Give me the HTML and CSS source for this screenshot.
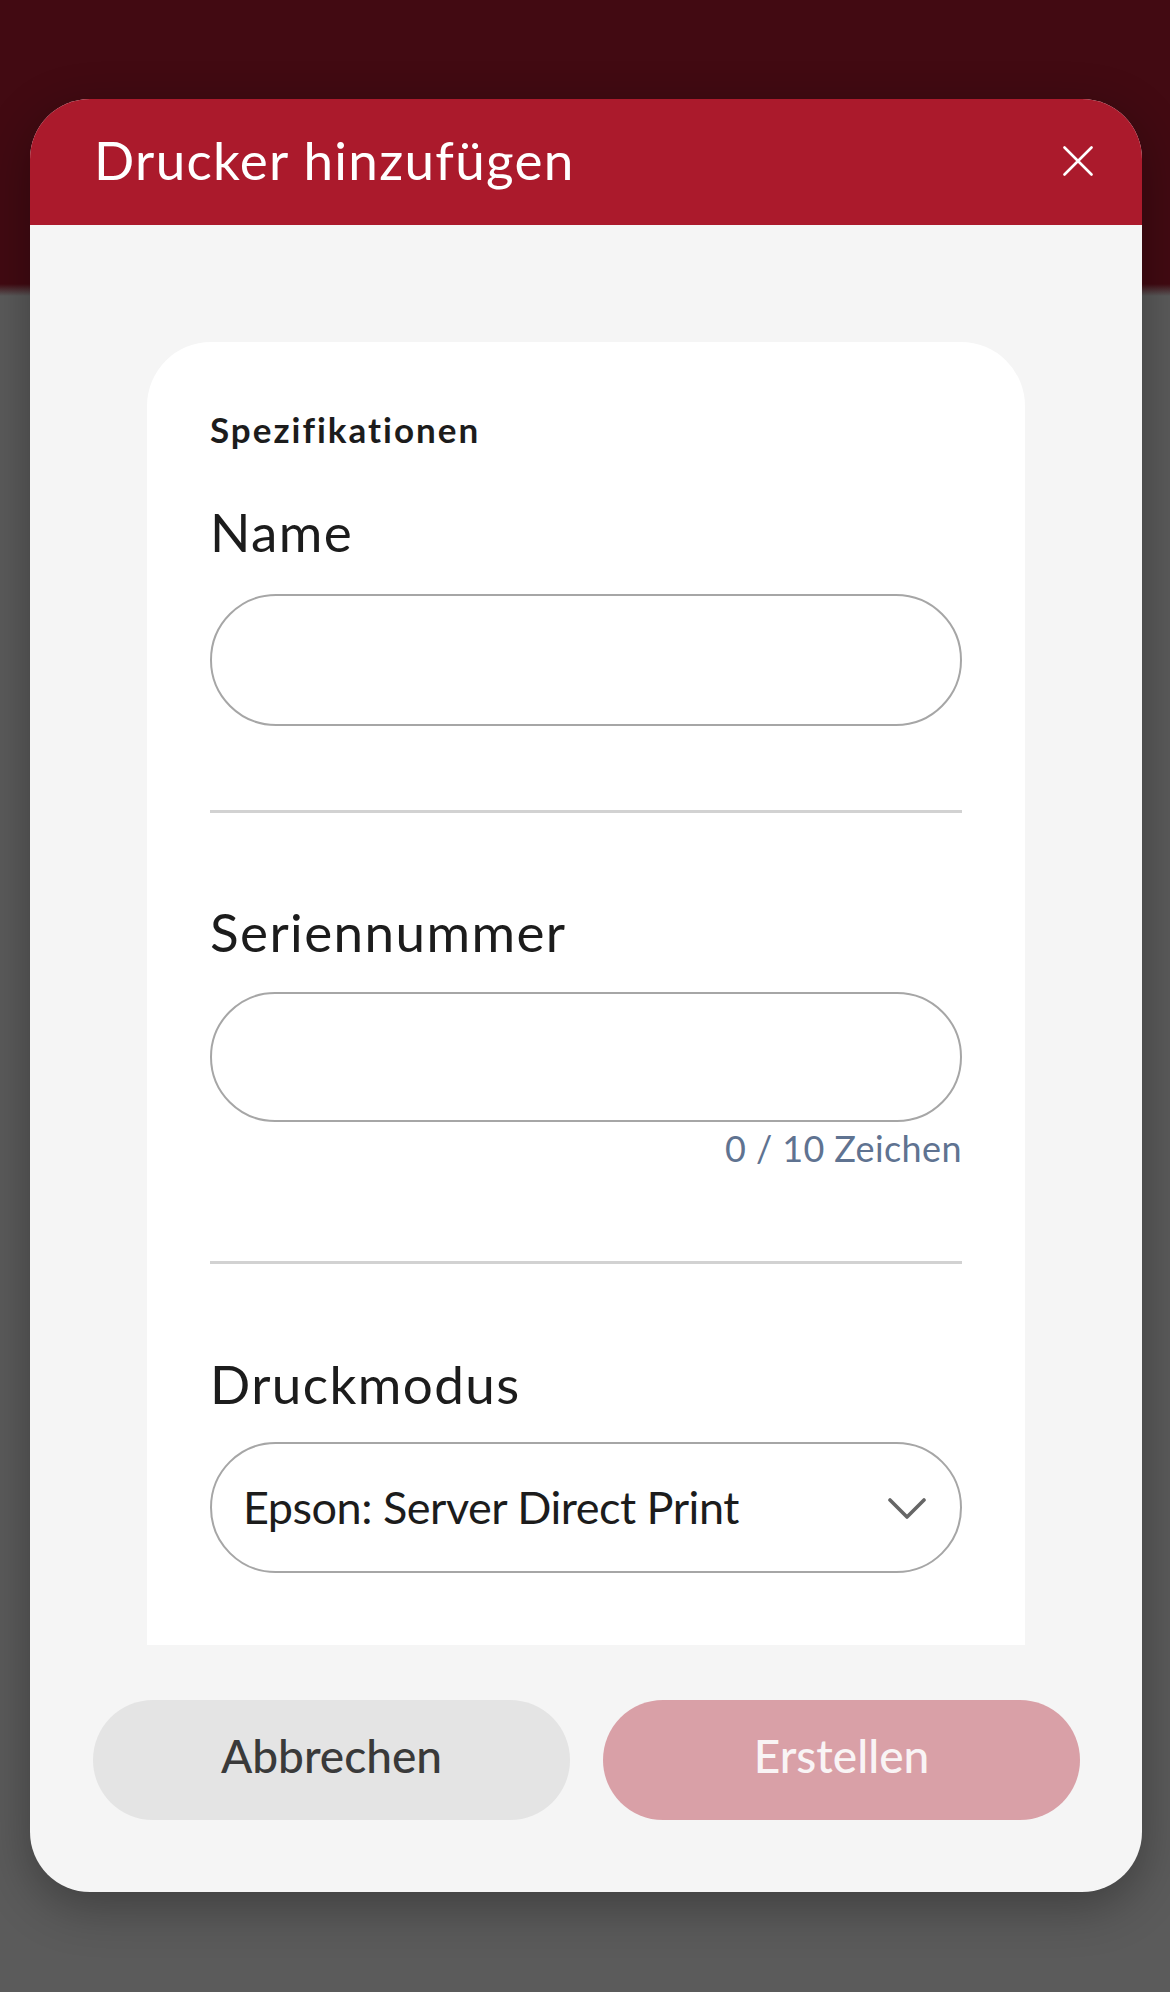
FILE: index.html
```html
<!DOCTYPE html>
<html lang="de">
<head>
<meta charset="utf-8">
<title>Drucker hinzufügen</title>
<link rel="stylesheet" href="styles.css">
</head>
<body>
<div class="backdrop">
  <div class="dialog">
    <div class="dialog-header">
      <h1 class="dialog-title">Drucker hinzufügen</h1>
      <button class="close-btn" aria-label="Schließen">
        <svg width="30" height="30" viewBox="0 0 30 30"><path d="M1.5 1.5 L28.5 28.5 M28.5 1.5 L1.5 28.5" stroke="#fff" stroke-width="2.6" stroke-linecap="round" fill="none"/></svg>
      </button>
    </div>
    <div class="dialog-body">
      <div class="card">
        <div class="section-title">Spezifikationen</div>
        <label class="field-label label-name">Name</label>
        <div class="input input-name"></div>
        <div class="divider divider-1"></div>
        <label class="field-label label-serial">Seriennummer</label>
        <div class="input input-serial"></div>
        <div class="counter">0 / 10 Zeichen</div>
        <div class="divider divider-2"></div>
        <label class="field-label label-mode">Druckmodus</label>
        <div class="select">
          <span class="select-value">Epson: Server Direct Print</span>
          <svg class="chevron" width="38" height="22" viewBox="0 0 38 22"><path d="M2 2 L19 19 L36 2" stroke="#666" stroke-width="3.6" stroke-linecap="round" stroke-linejoin="round" fill="none"/></svg>
        </div>
      </div>
    </div>
    <div class="dialog-actions">
      <button class="btn btn-cancel">Abbrechen</button>
      <button class="btn btn-create">Erstellen</button>
    </div>
  </div>
</div>
</body>
</html>
```
FILE: styles.css
```css
* { box-sizing: border-box; }
html, body {
  margin: 0;
  padding: 0;
}
body {
  width: 1170px;
  height: 1992px;
  overflow: hidden;
  font-family: "Lato", "Noto Sans", sans-serif;
  font-variant-ligatures: none;
  background: #5b5b5b;
}
.backdrop {
  height: 1992px;
  padding-top: 99px;
  background: linear-gradient(to bottom, #420a12 0, #420a12 284px, #5b5b5b 296px, #5b5b5b 100%);
}
.dialog {
  margin-left: 30px;
  width: 1112px;
  height: 1793px;
  border-radius: 60px;
  overflow: hidden;
  background: #f5f5f5;
  box-shadow: 0 14px 50px rgba(0, 0, 0, 0.32);
  display: flex;
  flex-direction: column;
}
.dialog-header {
  height: 126px;
  flex: none;
  background: #ab1a2c;
  display: flex;
  align-items: center;
  justify-content: space-between;
  padding: 0 49px 5px 64px;
}
.dialog-title {
  margin: 0;
  font-weight: 400;
  font-size: 53px;
  line-height: 1;
  letter-spacing: 1.3px;
  color: #ffffff;
}
.close-btn {
  border: 0;
  background: none;
  padding: 0;
  width: 30px;
  height: 30px;
  margin-top: 2px;
  display: block;
}
.close-btn svg { display: block; }
.dialog-body {
  padding: 117px 117px 0;
  flex: none;
}
.card {
  background: #ffffff;
  border-radius: 64px 64px 0 0;
  padding: 70px 63px 72px;
  display: flex;
  flex-direction: column;
}
.section-title {
  font-weight: 700;
  font-size: 35px;
  line-height: 1;
  letter-spacing: 2px;
  color: #1c1c1c;
  height: 35px;
}
.field-label {
  display: block;
  font-size: 53px;
  line-height: 1;
  letter-spacing: 1.4px;
  height: 53px;
  color: #1c1c1c;
}
.label-name { margin-top: 58px; }
.label-serial { margin-top: 92px; }
.label-mode { margin-top: 93px; }
.input {
  border: 2px solid #a6a6a6;
  border-radius: 70px;
  background: #fff;
}
.input-name { margin-top: 36px; height: 132px; }
.input-serial { margin-top: 34px; height: 130px; }
.counter {
  margin-top: 8px;
  text-align: right;
  font-size: 36px;
  line-height: 1;
  letter-spacing: 0.4px;
  color: #5f7391;
}
.divider {
  height: 3px;
  background: #d2d2d2;
}
.divider-1 { margin-top: 84px; }
.divider-2 { margin-top: 95px; }
.select {
  margin-top: 32px;
  height: 131px;
  border: 2px solid #a6a6a6;
  border-radius: 70px;
  display: flex;
  align-items: center;
  justify-content: space-between;
  padding: 0 34px 0 31px;
}
.select-value {
  font-size: 45px;
  line-height: 1;
  letter-spacing: -0.5px;
  color: #1c1c1c;
}
.chevron { display: block; margin-top: 2px; }
.dialog-actions {
  margin-top: 55px;
  padding: 0 62px 0 63px;
  display: flex;
  gap: 33px;
}
.btn {
  flex: 1;
  height: 120px;
  border: 0;
  border-radius: 60px;
  font-family: "Lato", "Noto Sans", sans-serif;
  font-size: 46px;
  font-weight: 500;
  line-height: 1;
  padding: 0 0 8px;
}
.btn-cancel {
  background: #e4e4e4;
  color: #3a3a3a;
}
.btn-create {
  background: #d9a0a7;
  color: #f9f4f5;
}
```
